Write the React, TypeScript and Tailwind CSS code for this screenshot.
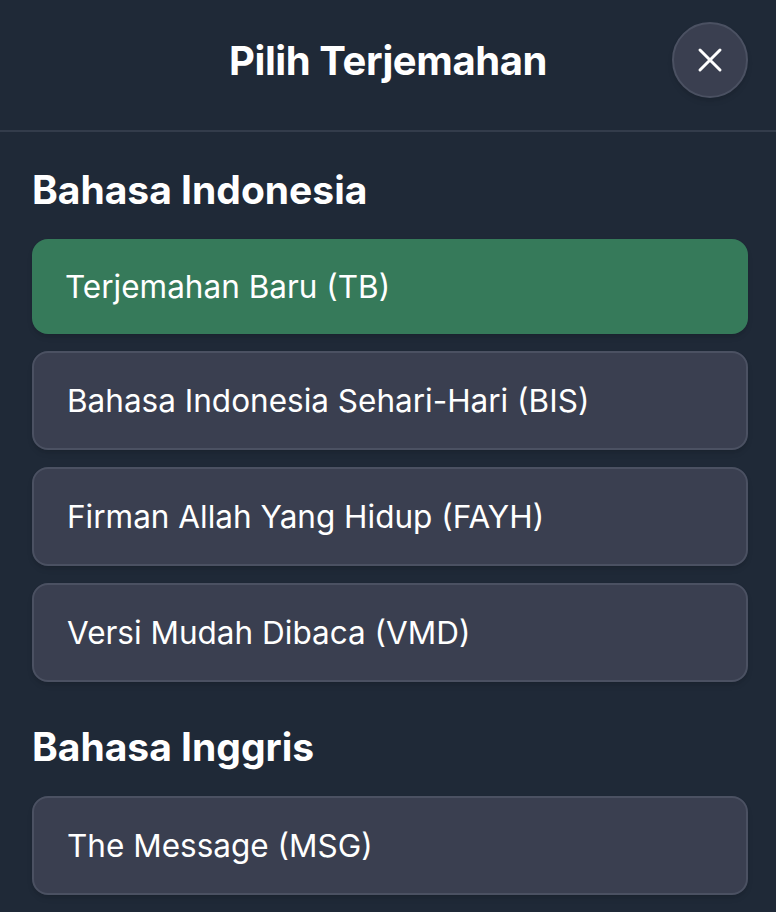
import React from "react";

const groups = [
  {
    title: "Bahasa Indonesia",
    pad: "pt-[38px]",
    items: [
      "Terjemahan Baru (TB)",
      "Bahasa Indonesia Sehari-Hari (BIS)",
      "Firman Allah Yang Hidup (FAYH)",
      "Versi Mudah Dibaca (VMD)",
    ],
  },
  {
    title: "Bahasa Inggris",
    pad: "pt-[45px]",
    items: ["The Message (MSG)"],
  },
];

const selected = "Terjemahan Baru (TB)";

export default function App() {
  return (
    <div className="w-[776px] h-[912px] overflow-hidden bg-[#1f2937] text-white font-['Inter',sans-serif]">
      <header className="h-[132px] flex items-center justify-center relative border-b-2 border-[#333c4b]">
        <h1 className="text-[40px] font-bold leading-none -mt-[8px] tracking-[-0.4px]">Pilih Terjemahan</h1>
        <button className="absolute right-[28px] top-[22px] w-[76px] h-[76px] rounded-full bg-[#3a3f50] border-2 border-[#4b5162] flex items-center justify-center shadow-md">
          <svg width="26" height="26" viewBox="0 0 26 26" fill="none" stroke="white" strokeWidth="3" strokeLinecap="round">
            <path d="M3 3L23 23M23 3L3 23" />
          </svg>
        </button>
      </header>

      <div className="pl-[32px] pr-[28px]">
        {groups.map((g) => (
          <section key={g.title}>
            <h2 className={`text-[39px] font-bold leading-none pb-[30px] ${g.pad}`}>{g.title}</h2>
            <div className="flex flex-col gap-[17px]">
              {g.items.map((it) =>
                it === selected ? (
                  <div key={it} className="h-[95px] rounded-[16px] bg-[#367a5a] flex items-center px-[33px] text-[31.5px] shadow-md">
                    {it}
                  </div>
                ) : (
                  <div key={it} className="h-[99px] rounded-[16px] bg-[#3a3f50] border-2 border-[#4b5162] flex items-center px-[33px] text-[31.5px] shadow-md">
                    {it}
                  </div>
                )
              )}
            </div>
          </section>
        ))}
      </div>
    </div>
  );
}
